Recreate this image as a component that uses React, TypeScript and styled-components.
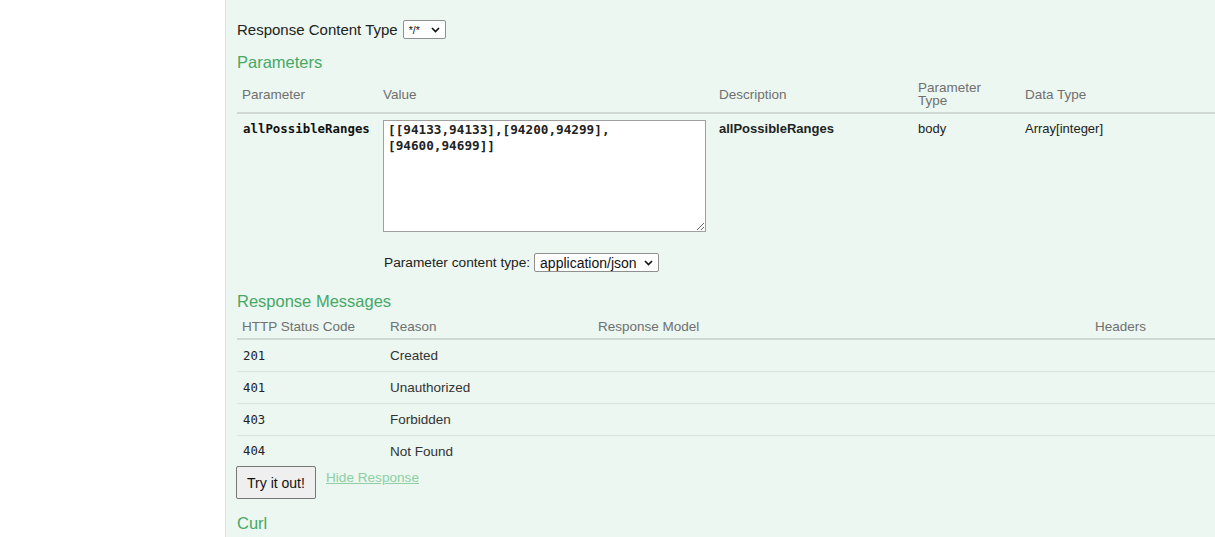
import React from 'react';
import styled, { createGlobalStyle } from 'styled-components';

const GlobalStyle = createGlobalStyle`
  html, body {
    margin: 0;
    padding: 0;
    background: #ffffff;
    overflow: hidden;
  }
  body {
    font-family: 'Liberation Sans', Arial, sans-serif;
    color: #333333;
  }
`;

const Page = styled.div`
  padding-left: 225px;
`;

const Panel = styled.div`
  background: #ebf7f0;
  border-left: 1px solid #d6e9dd;
  padding: 20px 0 14px 11px;
  min-height: 537px;
  box-sizing: border-box;
`;

const InlineRow = styled.div`
  display: flex;
  align-items: center;
  gap: 5px;
  height: 19px;
  font-size: 15px;
  color: #222;
`;

const SelectBox = styled.div<{ $width: number; $size: number }>`
  display: inline-flex;
  align-items: center;
  justify-content: space-between;
  box-sizing: border-box;
  width: ${p => p.$width}px;
  height: 19px;
  padding: 0 5px 0 5px;
  background: #ffffff;
  border: 1px solid #8f8f8f;
  border-radius: 2px;
  font-size: ${p => p.$size}px;
  color: #111;
`;

const Heading = styled.h4<{ $top: number }>`
  margin: ${p => p.$top}px 0 0 0;
  font-size: 16.5px;
  line-height: 19px;
  font-weight: normal;
  color: #47a866;
`;

const ParamGrid = styled.div`
  display: grid;
  grid-template-columns: 141px 336px 199px 107px 1fr;
`;

const HeadCell = styled.div<{ $height: number }>`
  box-sizing: border-box;
  height: ${p => p.$height}px;
  padding: 4px 5px 0 5px;
  display: flex;
  align-items: center;
  font-size: 13.5px;
  line-height: 13px;
  color: #707070;
  border-bottom: 2px solid #cfd8d3;
`;

const BodyCell = styled.div`
  padding: 6px 5px 0 5px;
  font-size: 13px;
  line-height: 17px;
  color: #222;
`;

const CodeName = styled.span`
  font-family: 'DejaVu Sans Mono', monospace;
  font-weight: bold;
  font-size: 12.4px;
  color: #111;
  margin-left: 1px;
`;

const BoldText = styled.span`
  font-weight: bold;
  color: #222;
`;

const ValueCell = styled.div`
  padding: 6px 0 0 5px;
  display: flex;
  flex-direction: column;
`;

const ValueArea = styled.textarea`
  box-sizing: border-box;
  width: 323px;
  height: 112px;
  margin: 0;
  padding: 1px 4px;
  border: 1px solid #a0a0a0;
  background: #ffffff;
  font-family: 'DejaVu Sans Mono', monospace;
  font-weight: bold;
  font-size: 12.7px;
  line-height: 16px;
  color: #222;
  resize: both;
  outline: none;
`;

const ContentTypeRow = styled(InlineRow)`
  margin-top: 21px;
  margin-left: 1px;
  font-size: 13.7px;
  gap: 4px;
`;

const RespGrid = styled.div`
  display: grid;
  grid-template-columns: 148px 208px 497px 1fr;
`;

const RespRow = styled.div<{ $last?: boolean }>`
  display: contents;
  & > div {
    box-sizing: border-box;
    height: ${p => (p.$last ? 30 : 32)}px;
    border-bottom: ${p => (p.$last ? 'none' : '1px solid #d9e3dd')};
  }
`;

const RespCell = styled.div`
  display: flex;
  align-items: center;
  padding: 0 5px;
  font-size: 13.5px;
  color: #333;
`;

const StatusCode = styled.span`
  font-family: 'DejaVu Sans Mono', monospace;
  font-size: 12.3px;
  color: #222;
  margin-left: 1px;
`;

const ActionRow = styled.div`
  display: flex;
  align-items: flex-start;
  gap: 10px;
`;

const TryButton = styled.button`
  box-sizing: border-box;
  width: 80px;
  height: 33px;
  margin: 0 0 0 -1px;
  padding: 0;
  background: #efefef;
  border: 1px solid #767676;
  border-radius: 2px;
  font-family: 'Liberation Sans', Arial, sans-serif;
  font-size: 14px;
  color: #111;
`;

const HideLink = styled.a`
  margin-top: 4px;
  font-size: 13.6px;
  color: #8fcfa3;
  text-decoration: underline;
`;

const Chevron = () => (
  <svg width="9" height="6" viewBox="0 0 9 6" fill="none">
    <path d="M1 1l3.5 3.5L8 1" stroke="#111" strokeWidth="1.6" />
  </svg>
);

const responses = [
  { code: '201', reason: 'Created' },
  { code: '401', reason: 'Unauthorized' },
  { code: '403', reason: 'Forbidden' },
  { code: '404', reason: 'Not Found' },
];

export default function App() {
  return (
    <>
      <GlobalStyle />
      <Page>
        <Panel>
          <InlineRow>
            Response Content Type
            <SelectBox $width={43} $size={10.5}>
              */* <Chevron />
            </SelectBox>
          </InlineRow>

          <Heading $top={14}>Parameters</Heading>
          <ParamGrid>
            <HeadCell $height={42}>Parameter</HeadCell>
            <HeadCell $height={42}>Value</HeadCell>
            <HeadCell $height={42}>Description</HeadCell>
            <HeadCell $height={42}>Parameter<br />Type</HeadCell>
            <HeadCell $height={42}>Data Type</HeadCell>

            <BodyCell>
              <CodeName>allPossibleRanges</CodeName>
            </BodyCell>
            <ValueCell>
              <ValueArea
                defaultValue="[[94133,94133],[94200,94299],[94600,94699]]"
                spellCheck={false}
              />
              <ContentTypeRow>
                Parameter content type:
                <SelectBox $width={125} $size={14}>
                  application/json <Chevron />
                </SelectBox>
              </ContentTypeRow>
            </ValueCell>
            <BodyCell>
              <BoldText>allPossibleRanges</BoldText>
            </BodyCell>
            <BodyCell>body</BodyCell>
            <BodyCell>Array[integer]</BodyCell>
          </ParamGrid>

          <Heading $top={20}>Response Messages</Heading>
          <RespGrid>
            <HeadCell $height={29}>HTTP Status Code</HeadCell>
            <HeadCell $height={29}>Reason</HeadCell>
            <HeadCell $height={29}>Response Model</HeadCell>
            <HeadCell $height={29}>Headers</HeadCell>
            {responses.map((r, i) => (
              <RespRow key={r.code} $last={i === responses.length - 1}>
                <RespCell>
                  <StatusCode>{r.code}</StatusCode>
                </RespCell>
                <RespCell>{r.reason}</RespCell>
                <RespCell />
                <RespCell />
              </RespRow>
            ))}
          </RespGrid>

          <ActionRow>
            <TryButton>Try it out!</TryButton>
            <HideLink href="#">Hide Response</HideLink>
          </ActionRow>

          <Heading $top={15}>Curl</Heading>
        </Panel>
      </Page>
    </>
  );
}
